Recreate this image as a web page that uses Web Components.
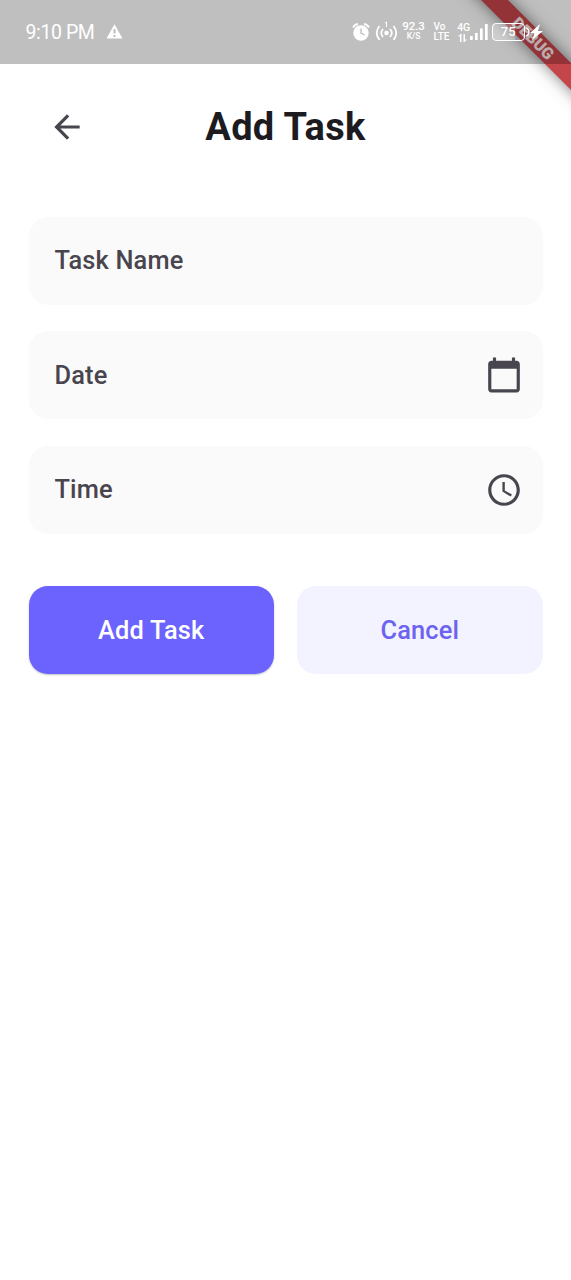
<!DOCTYPE html>
<html lang="en">
<head>
<meta charset="utf-8">
<title>Add Task</title>
<style>
html,body{margin:0;background:#fff}
body{font-family:Roboto,"Liberation Sans",sans-serif;color:#1c1b1f;height:1280px;position:relative;overflow:hidden}
</style>
</head>
<body>
<task-screen></task-screen>
<script>
const define = (name, html) => customElements.define(name, class extends HTMLElement {
  constructor() {
    super();
    this.attachShadow({ mode: 'open' }).innerHTML = html;
  }
});

define('status-bar', `
<style>
:host{display:flex;box-sizing:border-box;height:64px;padding:0 26px 0 25.5px;align-items:center;background:rgba(0,0,0,.25);color:#fff;position:relative;z-index:2}
svg{display:block;flex:none;fill:#fff}
.time{font-size:19.5px;line-height:24px;width:80px;white-space:nowrap;letter-spacing:-.4px;padding-top:2px}
.right{display:flex;align-items:center;margin-left:auto}
.stack{display:flex;flex-direction:column;align-items:center;font-weight:500;white-space:nowrap}
.rate{font-size:11.5px;line-height:12px;width:22px;margin-left:5px;margin-top:-4px;letter-spacing:-.1px}
.rate small{font-size:8.5px;line-height:9px}
.volte{width:16px;margin-left:9px;align-items:flex-start}
.volte span{line-height:10px;font-size:10px}
.net{font-size:10.5px;line-height:10px;width:14px;margin-left:7px;letter-spacing:-.3px}
.net svg{margin-top:1px;margin-right:3px}
.bat{box-sizing:border-box;width:33.500px;height:18px;border:1.5px solid #fff;border-radius:4px;font-size:13px;line-height:15px;text-align:center;font-weight:500;background:linear-gradient(90deg,rgba(255,255,255,.25) 72%,transparent 72%)}
</style>
<span class="time">9:10 PM</span>
<svg style="margin-top:-1px" width="17" height="15" viewBox="0 0 17 15"><path fill-rule="evenodd" d="M8.5.3 16.5 14.5H.5zM7.5 5v4.5h2V5zm0 6v2h2v-2z"/></svg>
<div class="right">
<svg width="18" height="20" viewBox="0 0 18 20"><path d="M1 5.5Q2.5 2.5 6 2M17 5.5Q15.5 2.5 12 2" fill="none" stroke="#fff" stroke-width="1.8"/><circle cx="9" cy="11" r="7.7"/><path d="M9 6.5V11l3.5 2" fill="none" stroke="#bfbfbf" stroke-width="1.4"/></svg>
<svg style="margin-left:5px" width="23" height="22" viewBox="0 0 23 22"><circle cx="11.5" cy="12" r="2.3"/><g fill="none" stroke="#fff" stroke-width="1.8"><path d="M8 8Q4.500 12 8 16M15 8Q18.500 12 15 16M4.500 5Q-1 12 4.500 19M18.500 5Q24 12 18.500 19"/><path stroke-width="1" d="M10 2.2 11.500 1V6"/></g></svg>
<div class="stack rate"><span>92.3</span><small>K/S</small></div>
<div class="stack volte"><span>Vo</span><span>LTE</span></div>
<div class="stack net"><span>4G</span><svg width="9" height="8" viewBox="0 0 9 8"><path d="M2 0h1.500v8H2zM5.500 0H7v8H5.500zM0 2.500 2.500 0v2.500zM9 5.500 6.500 8V5.500z"/></svg></div>
<svg width="18" height="18" viewBox="0 0 18 18" style="margin-left:-1px"><path d="M0 13h2.700v4H0zM5 10h2.700v7H5zM10 5.500h2.700V17H10zM15 1h2.700v16H15z"/></svg>
<div class="bat" style="margin-left:4px">75</div>
<svg style="margin-left:1px" width="19" height="18" viewBox="0 0 19 18"><path d="M0 5Q3 6 3 9T0 13" fill="none" stroke="#fff" stroke-width="1.500"/><path d="M14 1 4 10h4.500L6 17 17 8h-5z"/></svg>
</div>`);

define('debug-banner', `
<style>
:host{position:absolute;top:0;right:0;width:140px;height:140px;overflow:hidden;z-index:1;pointer-events:none}
div{position:absolute;left:-8.100px;top:29px;width:220px;height:19px;transform:rotate(45deg);background:#c4454a;box-shadow:0 0 16px rgba(0,0,0,.5);color:#f8e6e6;text-align:center;font-weight:900;font-size:16.200px;line-height:19px}
</style><div>DEBUG</div>`);

define('top-bar', `
<style>
:host{display:grid;grid-template-columns:38px 1fr 38px;align-items:center;height:126px;padding:0 47.500px 0 47.500px}
svg{fill:#49454f}
h1{margin:0;font-size:38px;font-weight:700;text-align:center;line-height:48px;letter-spacing:.350px;color:#1c1b1f}
</style>
<svg width="38" height="38" viewBox="0 0 24 24"><path d="M20 11H7.830l5.590-5.590L12 4l-8 8 8 8 1.410-1.410L7.830 13H20v-2z"/></svg>
<h1><slot></slot></h1>`);

define('task-field', `
<style>
:host{display:flex;align-items:center;justify-content:space-between;box-sizing:border-box;height:88px;border-radius:19px;background:#fafafa;padding:0 19.500px 0 26px;font-size:25.400px;font-weight:500;letter-spacing:.150px;color:#49454f}
span{padding-bottom:1.500px}
::slotted(svg){fill:#49454f;display:block}
</style>
<span><slot></slot></span><slot name="icon"></slot>`);

define('task-button', `
<style>
:host{display:flex;flex:1;height:88px;border-radius:19px;align-items:center;justify-content:center;font-size:25.400px;font-weight:500;letter-spacing:.160px;background:#f3f2ff;color:#6c63f0}
:host([primary]){background:#6c63ff;color:#fff;box-shadow:0 1px 2px rgba(0,0,0,.24)}
</style><slot></slot>`);

define('task-screen', `
<style>
:host{display:block;height:1280px}
form{display:flex;flex-direction:column;gap:26.400px;padding:27px 28.500px 0;margin:0}
.actions{display:flex;gap:23px;margin-top:25.800px}
</style>
<debug-banner></debug-banner>
<status-bar></status-bar>
<top-bar>Add Task</top-bar>
<form>
<task-field>Task Name</task-field>
<task-field>Date<svg slot="icon" width="38" height="38" viewBox="0 0 24 24"><path d="M20 3h-1V1h-2v2H7V1H5v2H4c-1.100 0-2 .9-2 2v16c0 1.100.9 2 2 2h16c1.100 0 2-.9 2-2V5c0-1.100-.9-2-2-2zm0 18H4V8h16v13z"/></svg></task-field>
<task-field>Time<svg slot="icon" width="38" height="38" viewBox="0 0 24 24"><path d="M11.990 2C6.470 2 2 6.480 2 12s4.470 10 9.990 10C17.520 22 22 17.520 22 12S17.520 2 11.990 2zM12 20c-4.420 0-8-3.580-8-8s3.580-8 8-8 8 3.580 8 8-3.580 8-8 8zm.5-13H11v6l5.250 3.150.75-1.230-4.500-2.670z"/></svg></task-field>
<div class="actions"><task-button primary>Add Task</task-button><task-button>Cancel</task-button></div>
</form>`);
</script>
</body>
</html>
